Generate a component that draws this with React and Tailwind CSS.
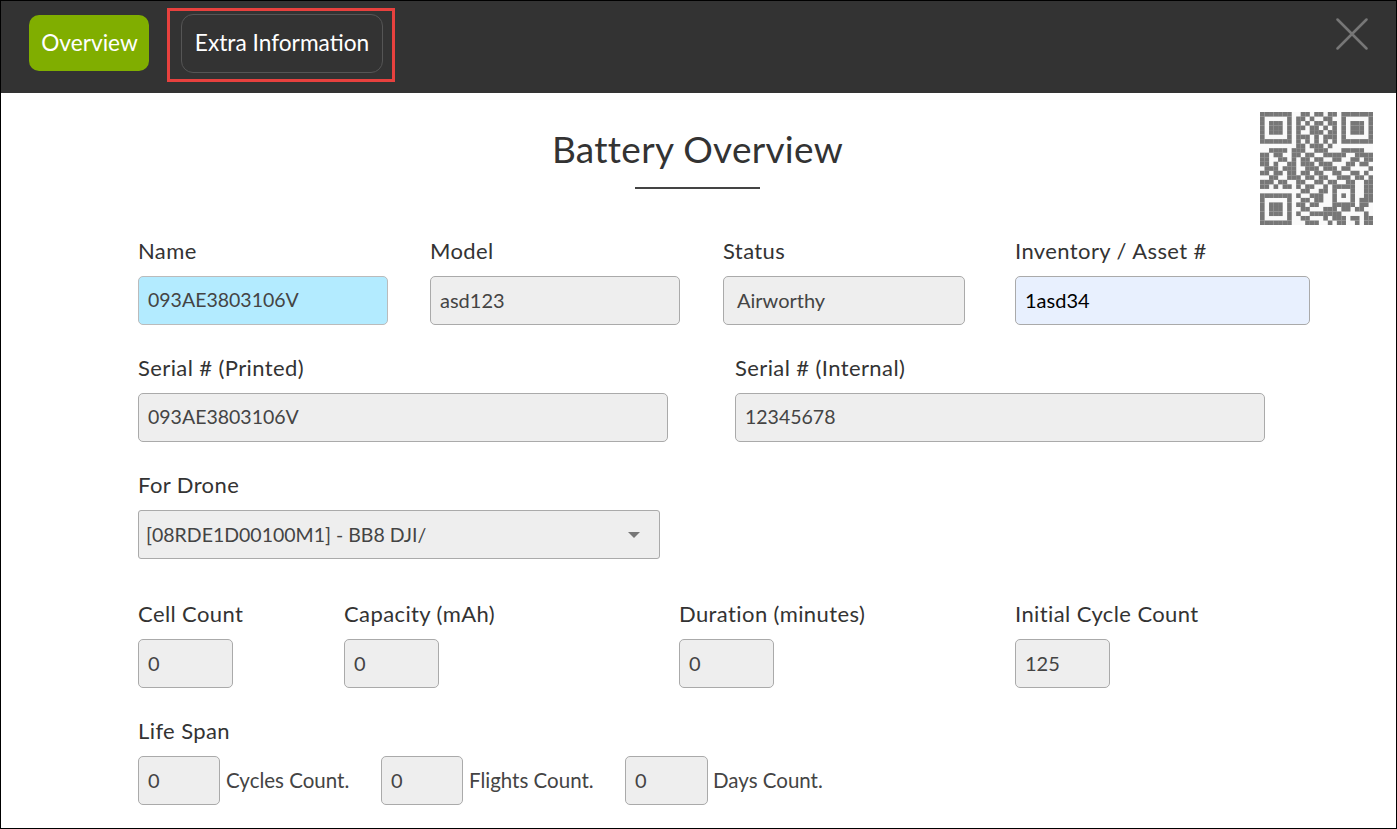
const qr = [
  "1111111001101101101111111",
  "1000001011010011001000001",
  "1011101010101101101011101",
  "1011101011011010101011101",
  "1011101010011101101011101",
  "1000001011101011101000001",
  "1111111010101010101111111",
  "0000000011011101000000000",
  "0011110111001110001111100",
  "1101100110110011111001111",
  "1100110101101100110011011",
  "1101001101110111000110110",
  "0111011100111011101100001",
  "1101101101101100110011010",
  "0011001110110110011101101",
  "1110110011001101100110011",
  "1101011010110010111110011",
  "0000000001100110100010011",
  "1111111010011100101010011",
  "1000001001101100100010111",
  "1011101011011000111110110",
  "1011101001100011101101100",
  "1011101010011111110000010",
  "1000001001100010111011011",
  "1111111000111001011001011",
];

function Label({ children }) {
  return <label className="block text-[22px] leading-[28px] tracking-[0.4px] text-[#333]">{children}</label>;
}

function Input({ value, className = "", pad = "pl-[9px]", size = "text-[20px]" }) {
  return (
    <div
      className={`flex h-[49px] items-center rounded-[5px] border border-[#aaa] bg-[#eee] pb-[2px] text-[#444] ${size} ${pad} ${className}`}
    >
      {value}
    </div>
  );
}

export default function App() {
  return (
    <div className="h-[829px] w-[1397px] overflow-hidden border border-black bg-white font-['Lato',sans-serif]">
      {/* Header */}
      <header className="relative flex h-[92px] items-start bg-[#333] pl-[28px] pt-[14px]">
        <button className="h-[56px] w-[120px] rounded-[10px] bg-[#80ae00] pl-[1px] text-[22.7px] text-white">Overview</button>
        <div className="absolute left-[166px] top-[7px] h-[74px] w-[228px] border-[3px] border-[#e8413e] pl-[11px] pt-[3px]">
          <button className="h-[59px] w-[202px] rounded-[12px] border border-[#555] text-[22.7px] text-white">
            Extra Information
          </button>
        </div>
        <svg className="absolute left-[1335px] top-[17px]" width="32" height="32" viewBox="0 0 32 32">
          <path d="M1.5 1.5L30.5 30.5M30.5 1.5L1.5 30.5" stroke="#777" strokeWidth="2.5" strokeLinecap="round" />
        </svg>
      </header>

      {/* Body */}
      <main className="relative pl-[137px] pt-[32px]">
        <svg className="absolute left-[1259px] top-[19px]" width="113" height="113" viewBox="0 0 25 25">
          <rect width="25" height="25" fill="#fafafa" />
          {qr.flatMap((row, y) =>
            [...row].map((c, x) => (c === "1" ? <rect key={`${x}-${y}`} x={x} y={y} width="1.02" height="1.02" fill="#777" /> : null))
          )}
        </svg>

        <div className="flex flex-col items-center pr-[139px]">
          <h1 className="text-[37px] leading-[48px] tracking-[0.3px] text-[#333]">Battery Overview</h1>
          <div className="mt-[14px] h-[2px] w-[125px] bg-[#444]" />
        </div>

        <div className="mt-[48px] flex">
          <div className="w-[292px]">
            <Label>Name</Label>
            <Input value="093AE3803106V" size="text-[19.5px]" className="mt-[11px] w-[250px] !border-[#bbb] !bg-[#b3ebff]" />
          </div>
          <div className="w-[293px]">
            <Label>Model</Label>
            <Input value="asd123" className="mt-[11px] w-[250px]" />
          </div>
          <div className="w-[292px]">
            <Label>Status</Label>
            <Input value="Airworthy" pad="pl-[13px]" className="mt-[11px] w-[242px]" />
          </div>
          <div>
            <Label>Inventory / Asset #</Label>
            <Input value="1asd34" className="mt-[11px] w-[295px] !bg-[#e8f0fe] !text-black" />
          </div>
        </div>

        <div className="mt-[29px] flex">
          <div className="w-[597px]">
            <Label>Serial # (Printed)</Label>
            <Input value="093AE3803106V" size="text-[19.5px]" className="mt-[11px] w-[530px]" />
          </div>
          <div>
            <Label>Serial # (Internal)</Label>
            <Input value="12345678" size="text-[19.5px]" className="mt-[11px] w-[530px]" />
          </div>
        </div>

        <div className="mt-[29px]">
          <Label>For Drone</Label>
          <div className="mt-[11px] flex h-[49px] w-[522px] items-center justify-between rounded-[3px] border border-[#aaa] bg-[#eee] pl-[7px] pr-[19px] text-[19.5px] text-[#444]">
            <span>[08RDE1D00100M1] - BB8 DJI/</span>
            <span className="h-0 w-0 border-x-[6px] border-t-[6px] border-x-transparent border-t-[#777]" />
          </div>
        </div>

        <div className="mt-[41px] flex">
          <div className="w-[206px]">
            <Label>Cell Count</Label>
            <Input value="0" className="mt-[11px] w-[95px]" />
          </div>
          <div className="w-[335px]">
            <Label>Capacity (mAh)</Label>
            <Input value="0" className="mt-[11px] w-[95px]" />
          </div>
          <div className="w-[336px]">
            <Label>Duration (minutes)</Label>
            <Input value="0" className="mt-[11px] w-[95px]" />
          </div>
          <div>
            <Label>Initial Cycle Count</Label>
            <Input value="125" className="mt-[11px] w-[95px]" />
          </div>
        </div>

        <div className="mt-[29px]">
          <Label>Life Span</Label>
          <div className="mt-[11px] flex items-center text-[20.5px] text-[#444]">
            <Input value="0" className="w-[82px]" />
            <span className="ml-[6px] w-[155px]">Cycles Count.</span>
            <Input value="0" className="w-[82px]" />
            <span className="ml-[6px] w-[156px]">Flights Count.</span>
            <Input value="0" className="w-[83px]" />
            <span className="ml-[5px]">Days Count.</span>
          </div>
        </div>
      </main>
    </div>
  );
}
